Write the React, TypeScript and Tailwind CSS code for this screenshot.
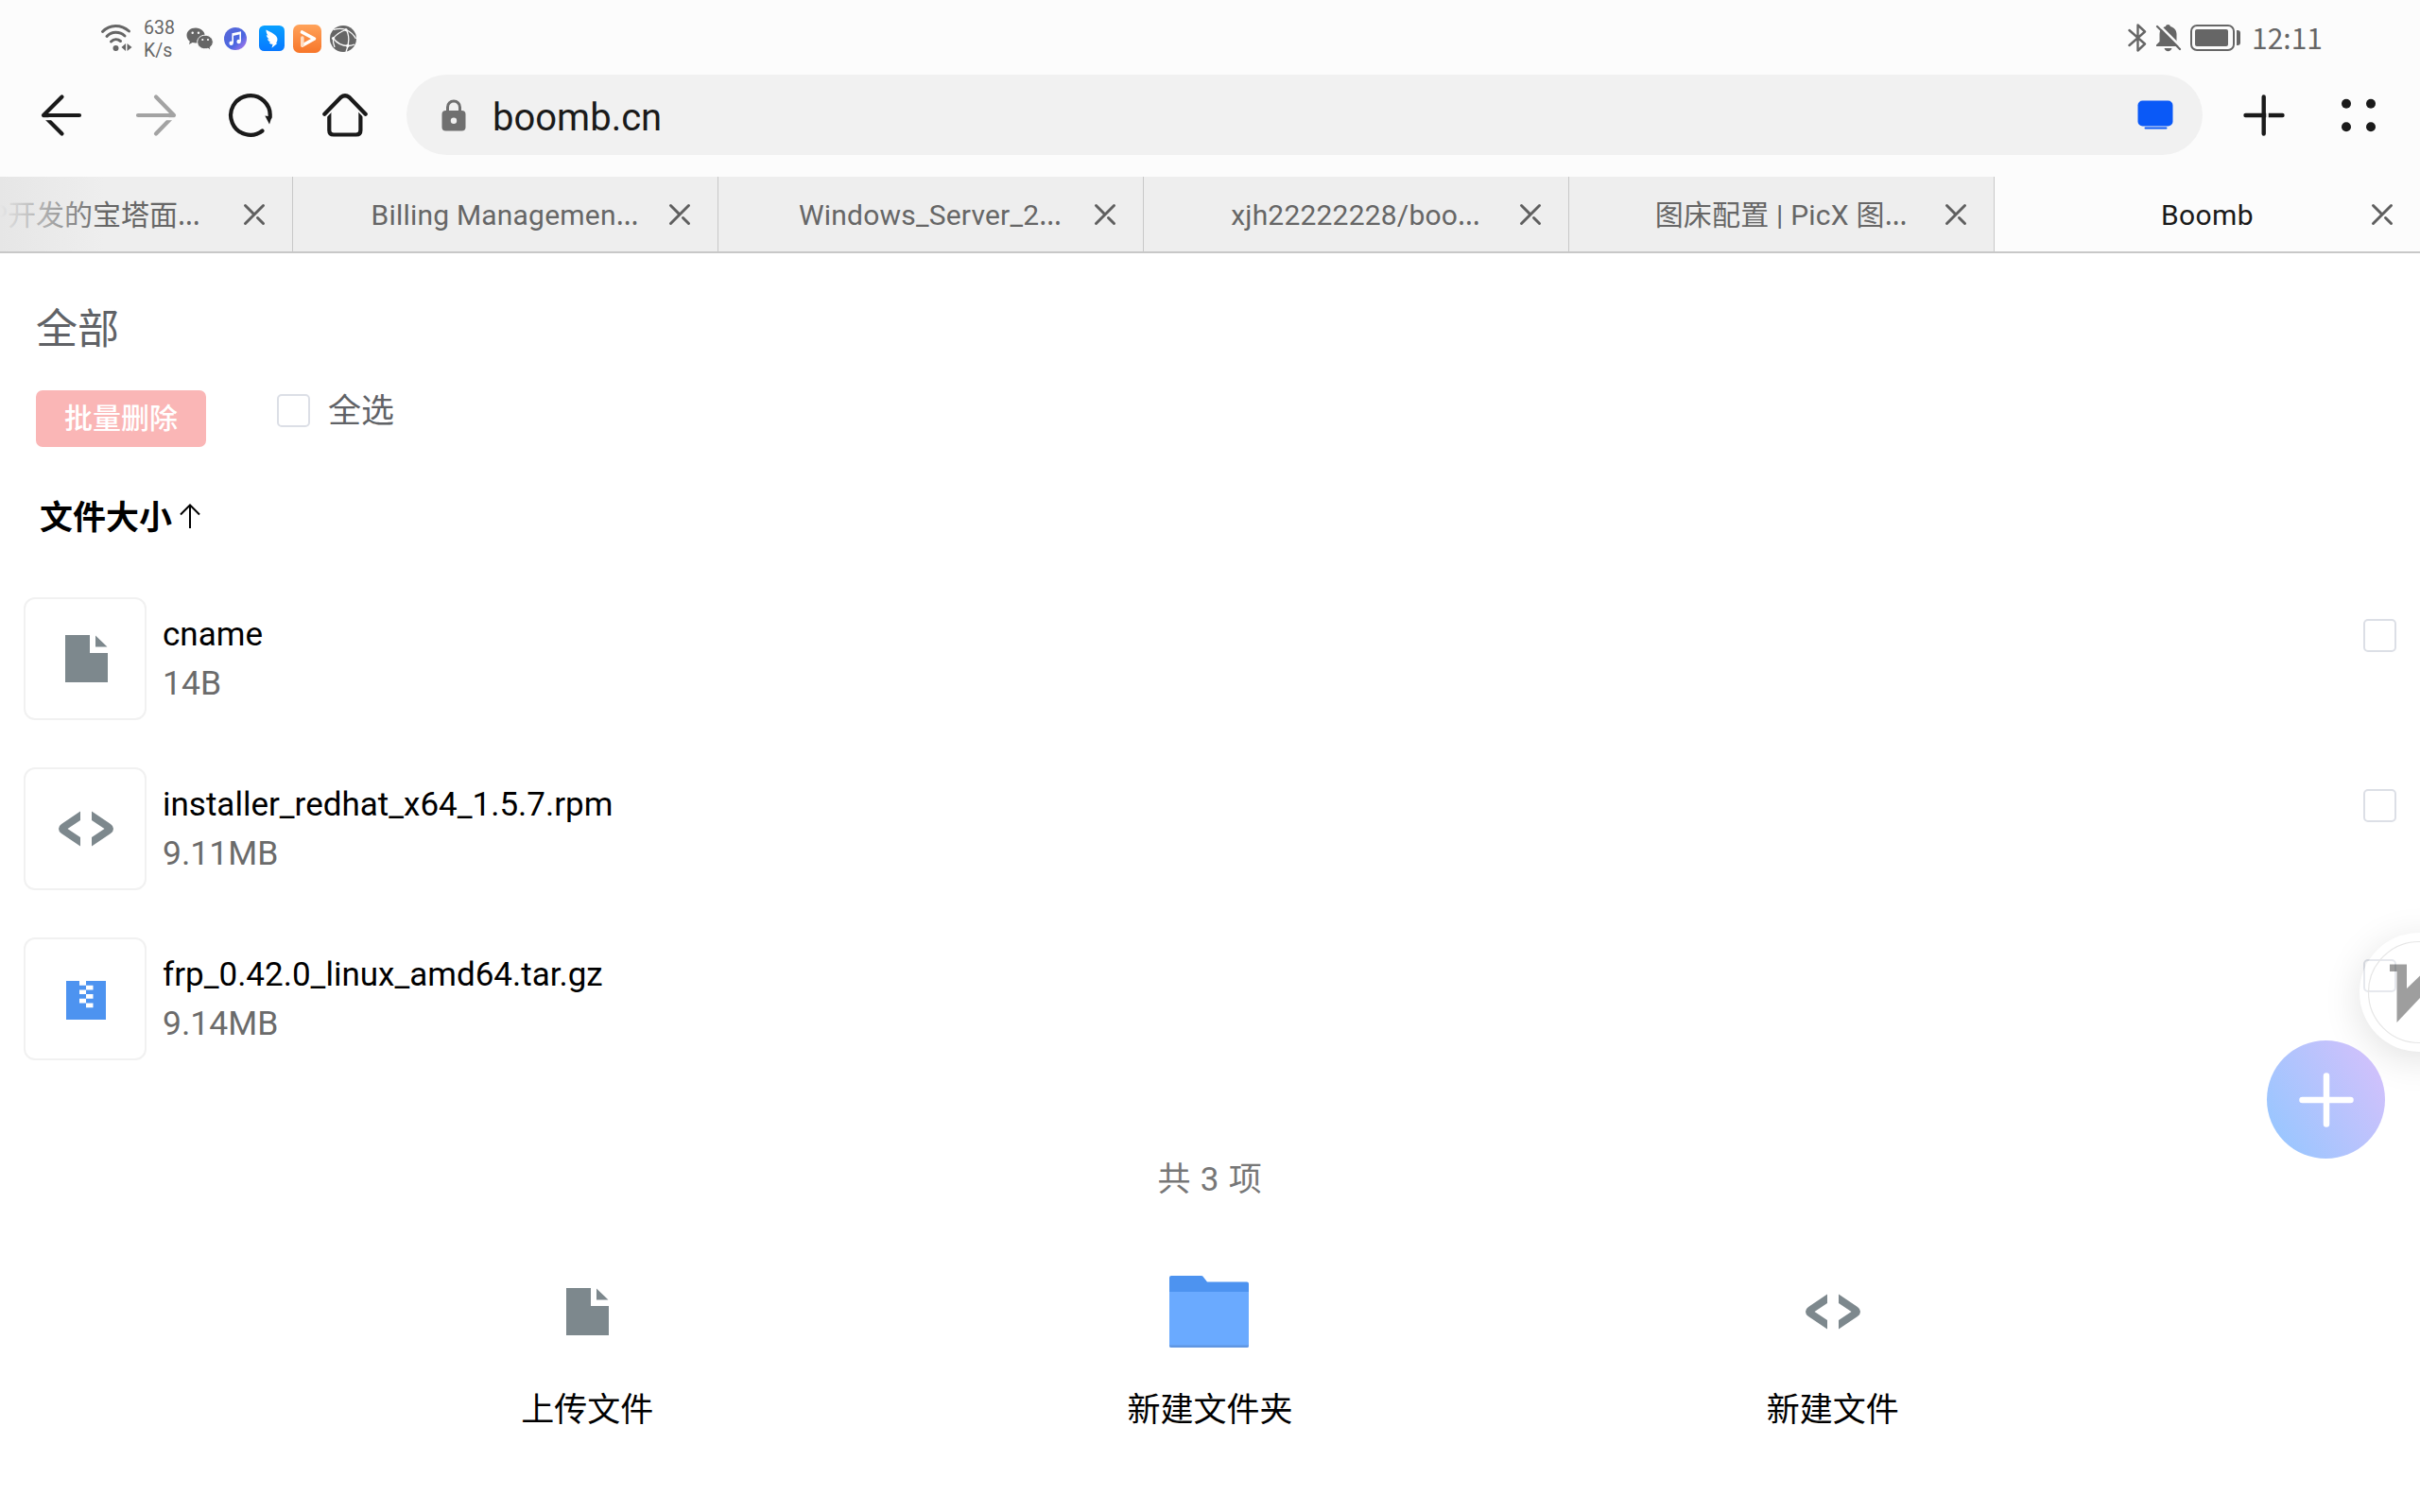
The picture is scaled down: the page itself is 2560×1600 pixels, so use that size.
import React from 'react';

const GRAY = '#666666';

function Wifi() {
  return (
    <svg className="w-[34px] h-[30px]" viewBox="0 0 34 30" fill="none" stroke={GRAY} strokeWidth="3" strokeLinecap="round">
      <path d="M2.500 8.500C10 0.500 22 0.500 30.500 8" />
      <path d="M7 13.500C12 8 20.500 8 26 13" />
      <path d="M11.500 19C14.500 16 18.500 16 21.500 18.500" />
      <circle cx="16.500" cy="26" r="3" fill={GRAY} stroke="none" />
      <path d="M27 21v8l-4.500-4zM28.500 21v8l5-4z" fill={GRAY} stroke="none" />
    </svg>
  );
}

function WeChat() {
  return (
    <svg className="w-[29px] h-[25px]" viewBox="0 0 29 25">
      <path d="M10 0.500C4.500 0.500 0.500 4 0.500 8.500c0 2.600 1.400 4.700 3.300 6.200L3 18l3.600-1.900c1.200.300 2.300.500 3.500.500 5.400 0 9.600-3.700 9.600-8S15.500.500 10 .500z" fill={GRAY} />
      <path d="M20 8.200c-4.700 0-8.300 3.200-8.300 7.300s3.600 7.300 8.300 7.300c1 0 2-.200 2.900-.500l3 1.700-.700-2.900c1.800-1.300 3.100-3.300 3.100-5.600 0-4-3.700-7.300-8.300-7.300z" fill={GRAY} stroke="#fcfcfc" strokeWidth="1" />
      <g fill="#fcfcfc">
        <circle cx="6.700" cy="5.800" r="1.200" />
        <circle cx="13" cy="5.800" r="1.200" />
        <circle cx="17.300" cy="13" r="1.100" />
        <circle cx="23" cy="13" r="1.100" />
      </g>
    </svg>
  );
}

function Music() {
  return (
    <svg className="w-[26px] h-[26px]" viewBox="0 0 26 26">
      <defs>
        <linearGradient id="music" x1="0" y1="0" x2="1" y2="1">
          <stop offset="0" stopColor="#5a68d8" />
          <stop offset="0.600" stopColor="#4a66e0" />
          <stop offset="1" stopColor="#c07cf0" />
        </linearGradient>
      </defs>
      <circle cx="13" cy="13" r="12" fill="url(#music)" />
      <path d="M10.200 17.500V8l8-1.700v9.500" fill="none" stroke="#fff" strokeWidth="1.600" />
      <path d="M10.200 8l8-1.700v2L10.200 10z" fill="#fff" />
      <circle cx="8.600" cy="17.700" r="2.200" fill="#fff" />
      <circle cx="16.600" cy="16" r="2.200" fill="#fff" />
    </svg>
  );
}

function Bird() {
  return (
    <svg className="w-[27px] h-[27px]" viewBox="0 0 27 27">
      <defs>
        <linearGradient id="bird" x1="0" y1="0" x2="0" y2="1">
          <stop offset="0" stopColor="#08a0ff" />
          <stop offset="1" stopColor="#0878ff" />
        </linearGradient>
      </defs>
      <rect width="27" height="27" rx="5.500" fill="url(#bird)" />
      <path d="M7.500 4.500c3.500 2 8.500 4 10.500 6.500 1.600 2 1.700 3.500 1.200 5.500l-1.200 2.300h1.500l-6 5 1-4c-1.800.3-3-.5-3.800-1.800l1.600-.4c-1.800-.5-3-1.800-3.400-3.300l2 .2C9 13.200 8 11.800 7.800 10l1.800.7C8 8.600 7.400 6.500 7.500 4.500z" fill="#fff" />
    </svg>
  );
}

function Video() {
  return (
    <svg className="w-[30px] h-[30px]" viewBox="0 0 30 30">
      <defs>
        <linearGradient id="video" x1="0" y1="0" x2="0" y2="1">
          <stop offset="0" stopColor="#ffa25a" />
          <stop offset="1" stopColor="#f7762a" />
        </linearGradient>
      </defs>
      <rect width="30" height="30" rx="6.500" fill="url(#video)" />
      <path d="M9.500 8l13 7-12.500 7" fill="none" stroke="#fff" strokeWidth="3.600" strokeLinejoin="round" strokeLinecap="round" />
      <path d="M9.800 22V14" stroke="#ffdcc2" strokeWidth="3.600" strokeLinecap="round" />
    </svg>
  );
}

function Globe() {
  return (
    <svg className="w-[28px] h-[28px]" viewBox="0 0 28 28">
      <circle cx="14" cy="14" r="14" fill={GRAY} />
      <g fill="none" stroke="#fcfcfc" strokeWidth="1.300">
        <path d="M4 4.500C8 3 13 3 17 4.500" />
        <path d="M3.500 13.500Q9 7 17 4.500" />
        <path d="M17 4.500C20.500 9 21 19 17 28" />
        <path d="M3.500 13.500C7 18 12 21.500 18.800 21.500" />
        <path d="M17 4.500Q24 7.500 27.500 14" />
        <path d="M18.800 21.500Q23 21.500 26 20" />
        <path d="M3.500 13.500Q3 18 5 23" />
      </g>
      <g fill="#fcfcfc">
        <circle cx="17" cy="4.500" r="1.600" />
        <circle cx="3.500" cy="13.500" r="1.600" />
        <circle cx="18.800" cy="21.500" r="1.700" />
      </g>
    </svg>
  );
}

function StatusBar() {
  return (
    <div className="flex h-[79px] items-start text-[#666666]">
      <div className="ml-[106px] mt-[25px]"><Wifi /></div>
      <div className="ml-[12px] mt-[18px] w-[34px] whitespace-nowrap font-[Roboto] text-[19.500px] leading-[24px]">
        <div>638</div>
        <div>K/s</div>
      </div>
      <div className="ml-[11px] mt-[29px]"><WeChat /></div>
      <div className="ml-[10px] mt-[28px]"><Music /></div>
      <div className="ml-[12px] mt-[27px]"><Bird /></div>
      <div className="ml-[9px] mt-[26px]"><Video /></div>
      <div className="ml-[9px] mt-[27px]"><Globe /></div>
      <div className="ml-auto flex">
        <svg className="mt-[24px] h-[32px] w-[20px]" viewBox="0 0 20 32" fill="none" stroke={GRAY} strokeWidth="2.400" strokeLinejoin="round" strokeLinecap="round">
          <path d="M1.500 8L18 22.500 10.500 29.500V2.500L18 9.500 1.500 24" />
        </svg>
        <svg className="ml-[9px] mt-[25px] h-[31px] w-[28px]" viewBox="0 0 28 31">
          <path d="M13.500 1c-1.600 0-2.300.9-2.500 1.900C7 4 4.500 7 4.500 11v8L1 22.500V24h25v-1.500L22.500 19v-8c0-4-2.500-7-6.500-8.100C15.700 1.900 15 1 13.500 1zM9.500 26h8c-.5 2-2 3.200-4 3.200s-3.500-1.200-4-3.200z" fill={GRAY} />
          <path d="M3.500 1L28 25.500" stroke="#fcfcfc" strokeWidth="2.500" />
          <path d="M2 3L26 27" stroke={GRAY} strokeWidth="2.200" strokeLinecap="round" />
        </svg>
        <div className="ml-[9px] mt-[26px] h-[28px] w-[47px] rounded-[7px] border-[2px] border-[#666666] p-[3px]">
          <div className="h-[18px] w-[35px] rounded-[2px] bg-[#666666]" />
        </div>
        <div className="ml-[2px] mt-[32px] h-[16px] w-[4px] rounded-r-[3px] bg-[#666666]" />
        <div className="ml-[12px] mr-[101px] mt-[19px] w-[77px] whitespace-nowrap font-['Noto_Sans_CJK_SC'] text-[30px] leading-[40px]">12:11</div>
      </div>
    </div>
  );
}

function Toolbar() {
  return (
    <div className="flex h-[108px] items-start">
      <svg className="ml-[40px] mt-[18px] h-[50px] w-[50px]" viewBox="0 0 50 50" fill="none" stroke="#1a1a1a" strokeWidth="4.200" strokeLinecap="round" strokeLinejoin="round">
        <path d="M25.500 5.500L6 25l19.500 19.500M6 25h38" />
        <path d="M0 28.700H30" stroke="#fcfcfc" strokeWidth="3" strokeLinecap="butt" />
      </svg>
      <svg className="ml-[50px] mt-[18px] h-[50px] w-[50px]" viewBox="0 0 50 50" fill="none" stroke="#a3a3a3" strokeWidth="4.200" strokeLinecap="round" strokeLinejoin="round">
        <path d="M25 5.500L44 25 25 44.500M6 25H44" />
        <path d="M20 28.700H50" stroke="#fcfcfc" strokeWidth="3" strokeLinecap="butt" />
      </svg>
      <svg className="ml-[50px] mt-[18px] h-[50px] w-[50px]" viewBox="0 0 50 50" fill="none" stroke="#1a1a1a" strokeWidth="4.200" strokeLinecap="round">
        <path d="M37.500 41.500A20.800 20.800 0 1 1 45.600 27" />
        <path d="M40.300 25.500L47.500 26.500 45 34.500z" fill="#1a1a1a" stroke="none" />
      </svg>
      <svg className="ml-[50px] mt-[18px] h-[50px] w-[50px]" viewBox="0 0 50 50" fill="none" stroke="#1a1a1a" strokeWidth="4.200" strokeLinecap="round" strokeLinejoin="round">
        <path d="M8.300 20V41Q8.300 45.500 13 45.500H36.800Q41.400 45.500 41.400 41V20" />
        <path d="M3.300 23.800L20.500 6Q25 2.500 29.500 6L46.700 23.800" stroke="#fcfcfc" strokeWidth="8" strokeLinecap="butt" />
        <path d="M3.300 23.800L20.500 6Q25 2.500 29.500 6L46.700 23.800" />
      </svg>
      <div className="ml-[40px] flex h-[85px] w-[1900px] items-center rounded-full bg-[#f1f1f1]">
        <svg className="ml-[37px] h-[34px] w-[26px]" viewBox="0 0 26 34">
          <path d="M6.500 13V8.500a6.500 6.500 0 0 1 13 0V13" fill="none" stroke="#707070" strokeWidth="3" />
          <rect x="0.500" y="12" width="25" height="21.500" rx="4" fill="#707070" />
          <circle cx="13" cy="22.700" r="3.200" fill="#f1f1f1" />
        </svg>
        <span className="ml-[28px] mt-[6px] text-[40px] leading-[60px] text-[#1a1a1a]">boomb.cn</span>
        <svg className="ml-auto mr-[31px] h-[32px] w-[38px]" viewBox="0 0 38 32">
          <rect x="0.500" y="0.500" width="37" height="27" rx="5" fill="#0a59f7" />
          <path d="M8.500 29.500h22" stroke="#0a59f7" strokeWidth="2" strokeLinecap="round" />
        </svg>
      </div>
      <svg className="ml-[40px] mt-[18px] h-[50px] w-[50px]" viewBox="0 0 50 50" stroke="#1a1a1a" strokeWidth="4.400" strokeLinecap="round">
        <path d="M5.500 25h39M24.700 5.500v39" />
        <path d="M28.500 20v10" stroke="#fcfcfc" strokeWidth="2.500" strokeLinecap="butt" />
      </svg>
      <svg className="ml-[50px] mt-[18px] h-[50px] w-[50px]" viewBox="0 0 50 50" fill="#1a1a1a">
        <circle cx="12" cy="12.700" r="5" />
        <circle cx="38" cy="12.700" r="5" />
        <circle cx="12" cy="37.200" r="5" />
        <circle cx="38" cy="37.200" r="5" />
      </svg>
    </div>
  );
}

const TABS = ['Billing Managemen', 'Windows_Server_2', 'xjh22222228/boo', '图床配置 | PicX 图'];

function Close() {
  return (
    <svg className="h-[24px] w-[24px]" viewBox="0 0 24 24" stroke="#5f5f5f" strokeWidth="3" strokeLinecap="round">
      <path d="M2.500 2.500l8.500 8.500M15.500 15.500l6 6M21.500 2.500l-19 19" />
    </svg>
  );
}

function Ellipsis() {
  return <span className="font-['Noto_Sans'] leading-none tracking-[1px]">…</span>;
}

function TabStrip() {
  return (
    <div className="flex h-[81px] border-b-2 border-[#c8c8c8] bg-[#eeeeee] text-[30px] leading-[44px] text-[#666666]">
      <div className="relative flex w-[310px] items-center overflow-hidden border-r border-[#c8c8c8]">
        <span className="ml-[-11px] mt-[3px] whitespace-nowrap">P开发的宝塔面<Ellipsis /></span>
        <div className="absolute inset-y-0 left-0 w-[110px] bg-linear-to-r from-[#e6e6e6] to-[#eeeeee]/0" />
        <div className="absolute right-[28px]"><Close /></div>
      </div>
      {TABS.map((title) => (
        <div key={title} className="flex w-[450px] items-center border-r border-[#c8c8c8]">
          <span className="ml-[68px] mt-[3px] flex-1 whitespace-nowrap text-center tracking-[0.2px]">{title}<Ellipsis /></span>
          <div className="ml-[16px] mr-[28px]"><Close /></div>
        </div>
      ))}
      <div className="flex w-[450px] items-center bg-[#fcfcfc]">
        <span className="ml-[68px] mt-[3px] flex-1 text-center tracking-[0.4px] text-[#1a1a1a]">Boomb</span>
        <div className="ml-[16px] mr-[28px]"><Close /></div>
      </div>
    </div>
  );
}

function FileIcon() {
  return (
    <svg className="h-[50px] w-[45px]" viewBox="0 0 45 50" fill="#7d888d">
      <path d="M0 0H26V19H45V50H0zM32 0.500L44.500 12.500H32z" />
    </svg>
  );
}

function CodeIcon() {
  return (
    <svg className="h-[38px] w-[58px]" viewBox="0 0 58 38" fill="#7d888d">
      <path d="M23 0.500V10L9.500 19 23 28V37.500L3 24Q0 22 0 19T3 14zM35 0.500V10L48.500 19 35 28V37.500L55 24Q58 22 58 19T55 14z" />
    </svg>
  );
}

function ZipIcon() {
  return (
    <svg className="mt-[3px] h-[41px] w-[42px]" viewBox="0 0 42 41">
      <rect width="42" height="41" fill="#4d93f0" />
      <path d="M14 0h7v4.700h-7zM21 4.700h7.500v4.700H21zM14 9.400h7v4.700h-7zM21 14.100h7.500v4.700H21zM14 18.800h7v4.700h-7zM21 23.500h7.500v4.700H21z" fill="#fff" />
    </svg>
  );
}

function FolderIcon() {
  return (
    <svg className="mr-px h-[76px] w-[84px]" viewBox="0 0 84 76">
      <path d="M2 0H34Q35.500 0 36.500 2L40 6.500H82Q84 6.500 84 8.500V30H0V2Q0 0 2 0z" fill="#4d93f0" />
      <path d="M0 17H84V74Q84 76 82 76H2Q0 76 0 74z" fill="#6aaaff" />
      <path d="M0 73.500H84V74Q84 76 82 76H2Q0 76 0 74z" fill="#6096e2" />
    </svg>
  );
}

function Checkbox() {
  return <div className="h-[35px] w-[35px] shrink-0 rounded-[5px] border-2 border-[#dcdfe6] bg-white" />;
}

const FILES = [
  { name: 'cname', size: '14B', icon: <FileIcon /> },
  { name: 'installer_redhat_x64_1.5.7.rpm', size: '9.11MB', icon: <CodeIcon /> },
  { name: 'frp_0.42.0_linux_amd64.tar.gz', size: '9.14MB', icon: <ZipIcon /> },
];

const ACTIONS = [
  { label: '上传文件', icon: <FileIcon /> },
  { label: '新建文件夹', icon: <FolderIcon /> },
  { label: '新建文件', icon: <CodeIcon /> },
];

export default function App() {
  return (
    <div className="relative h-[1600px] w-[2560px] overflow-hidden bg-white font-[Roboto,'Noto_Sans_CJK_SC',sans-serif]">
      <header className="bg-[#fcfcfc]">
        <StatusBar />
        <Toolbar />
        <TabStrip />
      </header>

      <main>
        <h1 className="ml-[38px] mt-[49px] text-[44px] leading-[64px] text-[#606266]">全部</h1>
        <div className="ml-[38px] mt-[32px] flex h-[60px] items-start">
          <button className="h-[60px] w-[180px] rounded-[7px] bg-[#fab6b6] text-[30px] font-medium leading-[60px] text-white">批量删除</button>
          <div className="ml-[75px] mt-[4px]"><Checkbox /></div>
          <span className="ml-[19px] mt-[-2px] text-[35px] leading-[50px] text-[#606266]">全选</span>
        </div>
        <div className="ml-[42px] mt-[48px] flex h-[50px] items-center text-black">
          <span className="mt-[5px] text-[35px] font-bold leading-[50px]">文件大小</span>
          <svg className="ml-[8px] h-[26px] w-[22px]" viewBox="0 0 22 26" fill="none" stroke="#000" strokeWidth="2">
            <path d="M11 26V1.500M1 11.500L11 1.500l10 10" />
          </svg>
        </div>

        <ul className="mt-[61px] flex flex-col gap-[50px]">
          {FILES.map((f) => (
            <li key={f.name} className="flex h-[130px] items-start pl-[25px] pr-[25px]">
              <div className="flex h-[130px] w-[130px] items-center justify-center rounded-[12px] border-2 border-[#f1f1f1] pl-[2px]">{f.icon}</div>
              <div className="ml-[17px] mt-[14px]">
                <div className="text-[35px] leading-[52px] text-black">{f.name}</div>
                <div className="text-[35.500px] leading-[51px] text-[#6b6b6b]">{f.size}</div>
              </div>
              <div className="ml-auto mt-[23px]"><Checkbox /></div>
            </li>
          ))}
        </ul>

        <div className="mt-[101px] text-center text-[35px] leading-[52px] tracking-[0.8px] text-[#777777]">共 3 项</div>

        <div className="mx-auto mt-[68px] grid w-[1976px] grid-cols-3">
          {ACTIONS.map((a) => (
            <div key={a.label} className="flex flex-col items-center">
              <div className="flex h-[90px] items-center">{a.icon}</div>
              <div className="mt-[34px] text-[35px] leading-[52px] text-black">{a.label}</div>
            </div>
          ))}
        </div>
      </main>

      <div className="absolute left-[2496px] top-[987px] h-[126px] w-[126px] rounded-full bg-white/30 shadow-[0_8px_40px_rgba(0,0,0,0.12)]">
        <svg className="h-[126px] w-[126px]" viewBox="0 0 126 126">
          <circle cx="63" cy="63" r="53.500" fill="none" stroke="#e6e6e6" strokeWidth="1.200" />
          <path d="M32 33.500H50V59L80 30V52L39.500 95V41H32z" fill="#000" fillOpacity="0.380" />
        </svg>
      </div>

      <button className="absolute left-[2398px] top-[1101px] flex h-[125px] w-[125px] items-center justify-center rounded-full bg-linear-[60deg] from-[#92c7ff] to-[#d8c0fb]">
        <svg className="h-[58px] w-[58px]" viewBox="0 0 58 58" stroke="#fff" strokeWidth="6.500" strokeLinecap="round">
          <path d="M3.500 29h51M29 3.500v51" />
        </svg>
      </button>
    </div>
  );
}
